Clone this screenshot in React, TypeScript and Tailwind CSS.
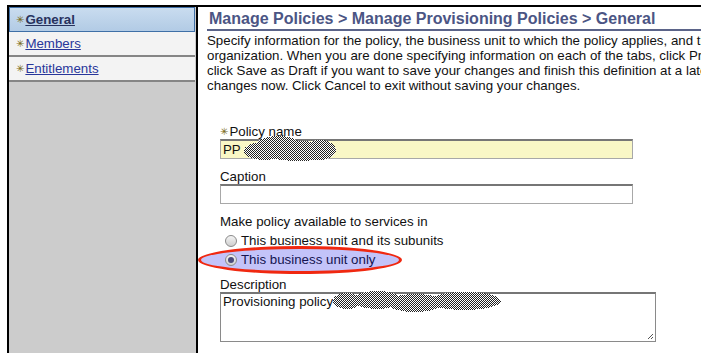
import React from 'react'

const font = { fontFamily: '"Liberation Sans", Arial, sans-serif' }

function Star() {
  return <span className="text-[10px] text-[#7a6a18] mr-[1px] align-[1px]" style={{ fontFamily: '"DejaVu Sans", sans-serif' }}>✳</span>
}

function Scribble({ id, blobs, w, h }: { id: string; blobs: { cx: number; cy: number; rx: number; ry: number }[]; w: number; h: number }) {
  return (
    <svg width={w} height={h} shapeRendering="crispEdges">
      <defs>
        <pattern id={id} width="2" height="2" patternUnits="userSpaceOnUse">
          <rect width="2" height="2" fill="#ffffff" />
          <rect width="1" height="1" fill="#222222" />
          <rect x="1" y="1" width="1" height="1" fill="#222222" />
        </pattern>
      </defs>
      <g fill={`url(#${id})`}>
        {blobs.map((b, i) => (
          <ellipse key={i} cx={b.cx} cy={b.cy} rx={b.rx} ry={b.ry} />
        ))}
      </g>
    </svg>
  )
}

function Radio({ checked }: { checked?: boolean }) {
  return (
    <span className="w-[12px] h-[12px] rounded-full border border-[#8a8a8a] bg-gradient-to-b from-[#f4f4f4] to-[#cfcfcf] flex items-center justify-center shrink-0">
      {checked && <span className="w-[6px] h-[6px] rounded-full bg-[#4a4a7c]" />}
    </span>
  )
}

const tabs = [
  { label: 'General', active: true },
  { label: 'Members' },
  { label: 'Entitlements' },
]

const lines = [
  'Specify information for the policy, the business unit to which the policy applies, and the priority of the policy in the',
  'organization. When you are done specifying information on each of the tabs, click Preview to review your changes, or',
  'click Save as Draft if you want to save your changes and finish this definition at a later time. Click Submit to submit your',
  'changes now. Click Cancel to exit without saving your changes.',
]

export default function App() {
  return (
    <div className="w-[701px] h-[353px] overflow-hidden bg-white relative text-[13.3px] text-[#111]" style={font}>
      <div className="ml-[7px] mt-[5px] h-[348px] border-t-2 border-l-2 border-black flex">
        {/* sidebar */}
        <div className="w-[189px] shrink-0 bg-[#cccccc] border-r-2 border-black flex flex-col">
          {tabs.map((t) =>
            t.active ? (
              <div key={t.label} className="h-[25px] border border-[#3f6fa6] bg-gradient-to-b from-[#c9dcef] to-[#b2cbe5] pl-[6px] flex items-center mr-[1px]">
                <Star />
                <a className="font-bold underline text-[#27325e]">{t.label}</a>
              </div>
            ) : (
              <div key={t.label} className="h-[25px] bg-[#f3f3f3] border-b-2 border-[#858585] pl-[7px] flex items-center mr-[1px]">
                <Star />
                <a className="underline text-[#28369a]">{t.label}</a>
              </div>
            )
          )}
        </div>

        {/* content */}
        <div className="flex-1 min-w-0 pl-[9px] overflow-hidden">
          <div className="h-[24px] border-b-2 border-[#5b6489] pl-[2px] flex items-end">
            <h1 className="text-[16px] font-bold text-[#4b5584] leading-[20px] whitespace-nowrap">
              Manage Policies &gt; Manage Provisioning Policies &gt; General
            </h1>
          </div>
          <div className="pt-[2px] leading-[15px]">
            {lines.map((l) => (
              <div key={l} className="whitespace-nowrap">{l}</div>
            ))}
          </div>

          <div className="ml-[13px] mt-[31px] flex flex-col w-[436px]">
            <label className="leading-[15px]"><Star />Policy name</label>
            <div className="h-[20px] w-[413px] bg-[#f9f7c6] border border-[#a8a8a8] border-t-2 border-t-[#767676] pl-[2px] leading-[17px]">PP</div>

            <label className="leading-[15px] mt-[10px]">Caption</label>
            <div className="h-[20px] w-[413px] bg-white border border-[#a8a8a8] border-t-2 border-t-[#767676]" />

            <label className="leading-[15px] mt-[10px]">Make policy available to services in</label>
            <div className="h-[19px] flex items-center pl-[5px] gap-[4px] mt-[2px] relative z-10">
              <Radio />
              <span>This business unit and its subunits</span>
            </div>
            <div className="h-[19px] flex items-center pl-[5px] gap-[4px] relative z-10 text-[#141450]">
              <Radio checked />
              <span>This business unit only</span>
            </div>

            <label className="leading-[15px] mt-[8px]">Description</label>
            <div className="h-[50px] w-[436px] bg-white border border-[#8a8a8a] border-t-2 border-t-[#767676] pl-[2px] leading-[16px] relative">
              Provisioning policy
              <svg className="absolute right-[1px] bottom-[1px]" width="8" height="8">
                <path d="M7 2 L2 7 M7 5 L5 7" stroke="#555" strokeWidth="1" />
              </svg>
            </div>
          </div>
        </div>
      </div>

      {/* annotation */}
      <div className="absolute left-[198px] top-[246px] w-[204px] h-[28px] rounded-[50%] border-[3px] border-[#f02810] bg-[#c3c3f9] z-0" />

      {/* redactions */}
      <div className="absolute left-[240px] top-[134px] z-20">
        <Scribble id="r1" w={100} h={30} blobs={[
          { cx: 38, cy: 11, rx: 22, ry: 9 },
          { cx: 24, cy: 17, rx: 20, ry: 9 },
          { cx: 58, cy: 17, rx: 38, ry: 10 },
          { cx: 80, cy: 16, rx: 16, ry: 10 },
        ]} />
      </div>
      <div className="absolute left-[331px] top-[290px] z-20">
        <Scribble id="r2" w={175} h={26} blobs={[
          { cx: 16, cy: 11, rx: 14, ry: 8 },
          { cx: 46, cy: 10, rx: 24, ry: 9 },
          { cx: 84, cy: 13, rx: 28, ry: 9 },
          { cx: 134, cy: 11, rx: 36, ry: 9 },
        ]} />
      </div>
    </div>
  )
}
